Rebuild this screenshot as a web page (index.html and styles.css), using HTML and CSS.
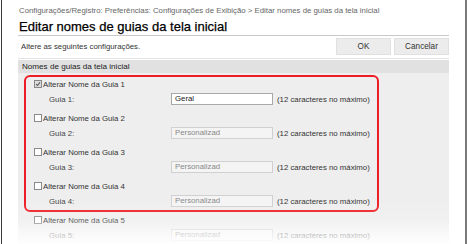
FILE: index.html
```html
<!DOCTYPE html>
<html lang="pt">
<head>
<meta charset="utf-8">
<link rel="stylesheet" href="styles.css">
</head>
<body>
<div class="window">
  <div class="page">
    <div class="crumb">Configurações/Registro: Preferências: Configurações de Exibição &gt; Editar nomes de guias da tela inicial</div>
    <h1 class="title">Editar nomes de guias da tela inicial</h1>
    <div class="toolbar">
      <span class="hint">Altere as seguintes configurações.</span>
      <div class="buttons">
        <button class="btn btn-ok">OK</button>
        <button class="btn btn-cancel">Cancelar</button>
      </div>
    </div>
    <div class="section">
      <div class="section-head">Nomes de guias da tela inicial</div>
      <div class="section-body">
        <div class="highlight">
          <div class="group">
            <label class="check-row"><span class="box checked"><svg viewBox="0 0 8 8" width="8" height="8"><path d="M1.5 4.2 L3.3 6 L6.6 1.8" fill="none" stroke="#555" stroke-width="1.4"/></svg></span>Alterar Nome da Guia 1</label>
            <div class="field-row"><span class="field-label">Guia 1:</span><span class="input">Geral</span><span class="note">(12 caracteres no máximo)</span></div>
          </div>
          <div class="group">
            <label class="check-row"><span class="box"></span>Alterar Nome da Guia 2</label>
            <div class="field-row"><span class="field-label">Guia 2:</span><span class="input disabled">Personalizad</span><span class="note">(12 caracteres no máximo)</span></div>
          </div>
          <div class="group">
            <label class="check-row"><span class="box"></span>Alterar Nome da Guia 3</label>
            <div class="field-row"><span class="field-label">Guia 3:</span><span class="input disabled">Personalizad</span><span class="note">(12 caracteres no máximo)</span></div>
          </div>
          <div class="group last">
            <label class="check-row"><span class="box"></span>Alterar Nome da Guia 4</label>
            <div class="field-row"><span class="field-label">Guia 4:</span><span class="input disabled">Personalizad</span><span class="note">(12 caracteres no máximo)</span></div>
          </div>
        </div>
        <div class="group outside">
          <label class="check-row"><span class="box"></span>Alterar Nome da Guia 5</label>
          <div class="field-row"><span class="field-label">Guia 5:</span><span class="input disabled">Personalizad</span><span class="note">(12 caracteres no máximo)</span></div>
        </div>
      </div>
    </div>
  </div>
  <div class="fade"></div>
</div>
</body>
</html>
```

FILE: styles.css
```css
* { box-sizing: border-box; }
html, body { margin: 0; padding: 0; background: #fff; }
body {
  width: 467px;
  height: 244px;
  overflow: hidden;
  font-family: "Liberation Sans", Arial, sans-serif;
  color: #333;
}
.window {
  position: relative;
  width: 466px;
  height: 244px;
  margin-left: 1px;
  border-left: 1px solid #3a3a3a;
  border-right: 2px solid #7a7a7a;
  overflow: hidden;
}
.page {
  padding: 6px 16px 0 16px;
}
.crumb {
  font-size: 7.8px;
  line-height: 10px;
  color: #666;
  white-space: nowrap;
  padding-left: 1px;
}
.title {
  margin: 2px 0 0;
  font-size: 13px;
  font-weight: normal;
  line-height: 17px;
  color: #000;
  padding-left: 1px;
  border-bottom: 1px solid #c8c8c8;
  -webkit-text-stroke: 0.25px #000;
}
.toolbar {
  display: flex;
  justify-content: space-between;
  align-items: center;
  height: 23px;
  padding: 0 0 1px 3px;
  border-bottom: 1px solid #e2e2e2;
}
.hint {
  font-size: 7.8px;
  color: #333;
}
.buttons {
  display: flex;
  gap: 3px;
}
.btn {
  height: 17px;
  border: 1px solid #e0e0e0;
  background: #ececec;
  font-family: inherit;
  font-size: 8.2px;
  color: #333;
  padding: 0;
}
.btn-ok { width: 55px; }
.btn-cancel { width: 55px; }
.section { margin-top: 1px; }
.section-head {
  background: #e1e1e1;
  height: 13px;
  line-height: 13px;
  font-size: 8.1px;
  color: #222;
  padding-left: 4px;
}
.section-body {
  background: #eeeeee;
  padding: 2px 0 20px 6px;
}
.highlight {
  width: 355px;
  border: 2px solid #ee1c24;
  border-radius: 6px;
  padding: 0 0 1px 8px;
}
.group { padding-bottom: 4px; }
.group.last { padding-bottom: 0; }
.group.outside { padding: 1px 0 0 10px; }
.check-row {
  display: flex;
  align-items: center;
  height: 14px;
  font-size: 7.8px;
  color: #333;
  white-space: nowrap;
}
.box {
  width: 8px;
  height: 8px;
  border: 1px solid #8a8a8a;
  background: #fff;
  margin-right: 1px;
  display: inline-flex;
  align-items: center;
  justify-content: center;
}
.box.checked { background: #dcdcdc; border-color: #888; }
.box svg { display: block; }
.field-row {
  display: flex;
  align-items: center;
  height: 16px;
  padding-left: 15px;
  font-size: 7.8px;
  white-space: nowrap;
}
.field-label { width: 122px; flex: none; color: #444; }
.input {
  flex: none;
  width: 102px;
  height: 12px;
  line-height: 10px;
  border: 1px solid #a8a8a8;
  background: #fff;
  padding-left: 3px;
  color: #222;
}
.input.disabled {
  border-color: #d0d0d0;
  background: #f4f4f4;
  color: #888;
}
.note { margin-left: 4px; color: #333; }
.fade {
  position: absolute;
  left: 0;
  right: 0;
  bottom: 0;
  height: 46px;
  background: linear-gradient(to bottom, rgba(255,255,255,0), rgba(255,255,255,0.15) 45%, rgba(255,255,255,0.6) 75%, rgba(255,255,255,0.95));
  pointer-events: none;
}
```
